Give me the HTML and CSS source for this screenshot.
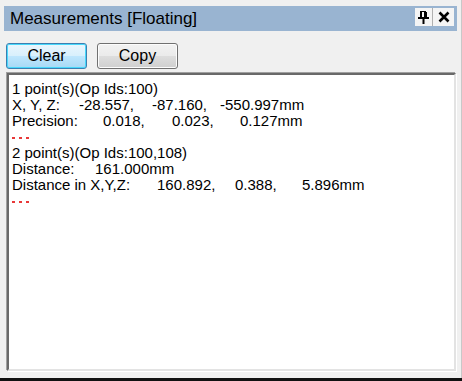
FILE: index.html
```html
<!DOCTYPE html>
<html>
<head>
<meta charset="utf-8">
<link rel="stylesheet" href="styles.css">
</head>
<body>
<div class="window">
  <div class="titlebar">
    <span class="title">Measurements [Floating]</span>
    <div class="tbtns">
      <button class="tbtn pin" aria-label="Pin">
        <svg width="11" height="13" viewBox="0 0 11 13"><path d="M2 0h6v1H2z M2 1h2v5H2z M6 1h3v5H6z M0 6h11v2H0z M4.5 8h2v5h-2z" fill="#000"/></svg>
      </button>
      <button class="tbtn close" aria-label="Close">
        <svg width="12" height="12" viewBox="0 0 12 12"><path d="M1.5 1.5L10.5 10.5M10.5 1.5L1.5 10.5" stroke="#000" stroke-width="2.6"/></svg>
      </button>
    </div>
  </div>
  <div class="toolbar">
    <button class="btn default">Clear</button>
    <button class="btn">Copy</button>
  </div>
  <div class="output">
    <div class="line">1 point(s)(Op Ids:100)</div>
    <div class="line"><span class="c c1a">X, Y, Z:</span><span class="c c2a">-28.557,</span><span class="c c3a">-87.160,</span><span>-550.997mm</span></div>
    <div class="line"><span class="c c1b">Precision:</span><span class="c c2b">0.018,</span><span class="c c3b">0.023,</span><span>0.127mm</span></div>
    <div class="line sep" aria-label="- - -"><i class="dash"></i><i class="dash"></i><i class="dash"></i></div>
    <div class="line">2 point(s)(Op Ids:100,108)</div>
    <div class="line"><span class="c c1c">Distance:</span><span>161.000mm</span></div>
    <div class="line"><span class="c c1d">Distance in X,Y,Z:</span><span class="c c2d">160.892,</span><span class="c c3d">0.388,</span><span>5.896mm</span></div>
    <div class="line sep" aria-label="- - -"><i class="dash"></i><i class="dash"></i><i class="dash"></i></div>
  </div>
</div>
<div class="bottom-edge"></div>
</body>
</html>
```
FILE: styles.css
```css
html, body {
  margin: 0;
  padding: 0;
}
body {
  width: 462px;
  height: 381px;
  background: #f0f0f0;
  font-family: "Liberation Sans", Arial, sans-serif;
  overflow: hidden;
  display: flex;
  flex-direction: column;
}
.window {
  flex: 1;
  padding: 0 4px;
  display: flex;
  flex-direction: column;
  border-right: 1px solid #c8c8c8;
}
.titlebar {
  margin-top: 6px;
  height: 25px;
  background: #99b4d1;
  display: flex;
  align-items: center;
  justify-content: space-between;
}
.title {
  font-size: 17px;
  color: #000;
  padding-left: 6px;
}
.tbtns {
  display: flex;
  margin-right: 3px;
  align-self: flex-start;
  margin-top: 2px;
}
.tbtn {
  height: 18px;
  padding: 0;
  margin: 0;
  border: none;
  background: #f4f4f4;
  display: flex;
  align-items: center;
  justify-content: center;
}
.tbtn.pin { width: 18px; border-right: 1px solid #b0b0b0; }
.tbtn.close { width: 21px; }
.toolbar {
  display: flex;
  gap: 10px;
  padding: 12px 0 4px 2px;
}
.btn {
  width: 81px;
  height: 26px;
  font-family: "Liberation Sans", Arial, sans-serif;
  font-size: 16px;
  color: #000;
  border: 1px solid #707070;
  border-radius: 3px;
  background: linear-gradient(#f2f2f2 0%, #ebebeb 48%, #dddddd 52%, #cfcfcf 100%);
  box-shadow: inset 0 0 0 1px #fcfcfc;
  padding: 0;
}
.btn.default {
  border-color: #3c7fb1;
  box-shadow: inset 0 0 0 1px #48d8fb;
  background: linear-gradient(#eaf6fd 0%, #d9f0fc 48%, #bee6fd 52%, #a7d9f5 100%);
}
.output {
  margin-left: 3px;
  width: 449px;
  height: 298px;
  box-sizing: border-box;
  background: #fff;
  border-style: solid;
  border-width: 2px;
  border-color: #696969 #e3e3e3 #e3e3e3 #696969;
  box-shadow: -1px -1px 0 #a0a0a0, 1px 1px 0 #fff;
  padding: 6px 0 0 3px;
  font-size: 15px;
  line-height: 16px;
  color: #000;
}
.line {
  display: flex;
  white-space: pre;
}
.c { display: inline-block; }
.c1a { width: 67px; }
.c2a { width: 73px; }
.c3a { width: 68px; }
.c1b { width: 91px; }
.c2b { width: 69px; }
.c3b { width: 68px; }
.c1c { width: 83px; }
.c1d { width: 145px; }
.c2d { width: 78px; }
.c3d { width: 67px; }
.sep {
  height: 16px;
  align-items: center;
  gap: 4px;
  padding-top: 2px;
  box-sizing: border-box;
}
.dash {
  display: block;
  width: 3px;
  height: 2px;
  background: #e83838;
}
.bottom-edge {
  height: 3px;
  background: #111;
  flex: none;
}
```
